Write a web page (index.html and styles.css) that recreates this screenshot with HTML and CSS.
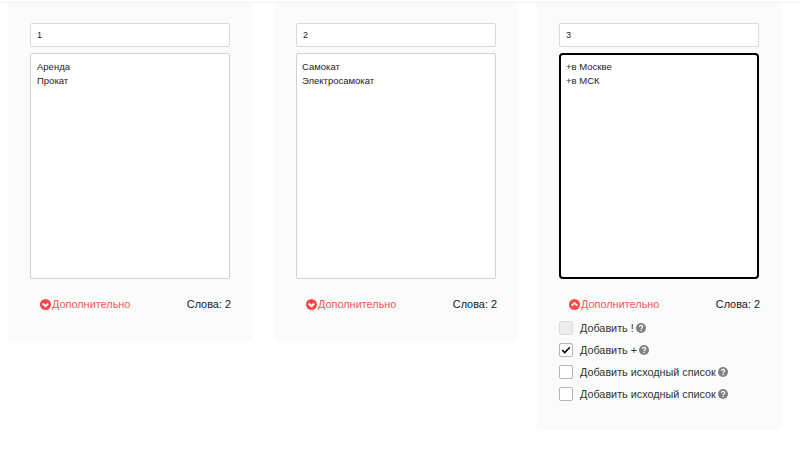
FILE: index.html
```html
<!DOCTYPE html>
<html lang="ru">
<head>
<meta charset="utf-8">
<title>Генератор</title>
<link rel="stylesheet" href="styles.css">
</head>
<body>
<svg class="defs" width="0" height="0" aria-hidden="true">
  <symbol id="down" viewBox="0 0 12 12"><circle cx="6" cy="6" r="6" fill="currentColor"/><path d="M3 4.9 6 7.9 9 4.9" fill="none" stroke="#fff" stroke-width="2"/></symbol>
  <symbol id="up" viewBox="0 0 12 12"><circle cx="6" cy="6" r="6" fill="currentColor"/><path d="M3 7.3 6 4.3 9 7.3" fill="none" stroke="#fff" stroke-width="2"/></symbol>
  <symbol id="help" viewBox="0 0 10 10"><circle cx="5" cy="5" r="5" fill="currentColor"/><path d="M3.4 3.9C3.5 2.9 4.2 2.4 5.1 2.4 6 2.4 6.7 3 6.7 3.8 6.7 4.9 5.1 4.9 5.1 6.1" fill="none" stroke="#fff" stroke-width="1.2"/><rect x="4.4" y="6.8" width="1.4" height="1.3" fill="#fff"/></symbol>
</svg>
<div class="topline"></div>
<main class="columns">
  <section class="card">
    <div class="field">1</div>
    <div class="area">Аренда<br>Прокат</div>
    <div class="meta">
      <a class="more"><svg class="chev"><use href="#down"/></svg>Дополнительно</a>
      <span class="count">Слова: 2</span>
    </div>
  </section>
  <section class="card">
    <div class="field">2</div>
    <div class="area area-tight">Самокат<br>Электросамокат</div>
    <div class="meta">
      <a class="more"><svg class="chev"><use href="#down"/></svg>Дополнительно</a>
      <span class="count">Слова: 2</span>
    </div>
  </section>
  <section class="card card-open">
    <div class="field">3</div>
    <div class="area area-focus">+в Москве<br>+в МСК</div>
    <div class="meta">
      <a class="more"><svg class="chev"><use href="#up"/></svg>Дополнительно</a>
      <span class="count">Слова: 2</span>
    </div>
    <ul class="options">
      <li class="option"><span class="box box-disabled"></span>Добавить !<svg class="help"><use href="#help"/></svg></li>
      <li class="option"><span class="box"><svg class="tick" viewBox="0 0 12 10"><path d="M1.2 5 4.4 8.2 10.8 1.6" fill="none" stroke="#000" stroke-width="1.9"/></svg></span>Добавить +<svg class="help"><use href="#help"/></svg></li>
      <li class="option"><span class="box"></span>Добавить исходный список<svg class="help"><use href="#help"/></svg></li>
      <li class="option"><span class="box"></span>Добавить исходный список<svg class="help"><use href="#help"/></svg></li>
    </ul>
  </section>
</main>
</body>
</html>
```
FILE: styles.css
```css
* { box-sizing: border-box; }

html, body {
  margin: 0;
  height: 450px;
  overflow: hidden;
  background: #fff;
  font-family: "Liberation Sans", Arial, sans-serif;
  color: #1c1c1c;
}

.defs { position: absolute; }

.topline {
  height: 3px;
  background: #fff;
  border-bottom: 1px solid #f0f0f0;
}

.columns {
  display: flex;
  align-items: flex-start;
  padding-left: 8px;
  gap: 22px;
}

.card {
  width: 244px;
  height: 338px;
  padding: 20px 22px 0;
  background: #fafbfb;
}

.card-open {
  height: 427px;
  margin-left: -3px;
}

.field {
  height: 24px;
  padding: 0 6px;
  background: #fff;
  border: 1px solid #d9d9d9;
  border-radius: 2px;
  font-size: 9px;
  line-height: 22px;
}

.area {
  height: 226px;
  margin-top: 6px;
  padding: 6px 6px;
  background: #fff;
  border: 1px solid #d2d2d2;
  border-radius: 2px;
  font-size: 9.5px;
  line-height: 14px;
}

.area-tight { padding-left: 5px; }

.area-focus {
  border: 2px solid #000;
  border-radius: 4px;
  padding: 5px 5px;
}

.meta {
  display: flex;
  justify-content: space-between;
  align-items: center;
  height: 14px;
  margin: 18px -1px 0 0;
  padding-left: 10px;
  font-size: 10.9px;
}

.more {
  display: flex;
  align-items: center;
  color: #f9565a;
}

.chev {
  width: 11px;
  height: 11px;
  margin-right: 1px;
  color: #f9474b;
}

.count { color: #14202c; }

.options {
  list-style: none;
  margin: 10px 0 0;
  padding: 0;
}

.option {
  display: flex;
  align-items: center;
  height: 14px;
  margin-bottom: 8px;
  font-size: 10.8px;
  color: #333;
}

.box {
  display: flex;
  align-items: center;
  justify-content: center;
  width: 14px;
  height: 14px;
  margin-right: 7px;
  background: #fff;
  border: 1px solid #b5b5b5;
  border-radius: 2px;
}

.box-disabled {
  background: #ececec;
  border-color: #dcdcdc;
}

.tick { width: 10px; height: 8px; }

.help {
  width: 10px;
  height: 10px;
  margin-left: 2px;
  color: #808080;
}
```
